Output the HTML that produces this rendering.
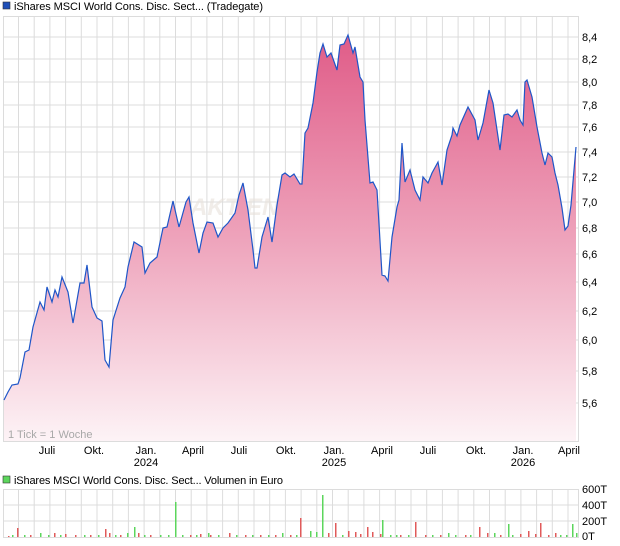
<!DOCTYPE html>
<html><head><meta charset="utf-8"><style>
html,body{margin:0;padding:0;background:#fff;width:620px;height:546px;overflow:hidden}
svg{display:block;font-family:"Liberation Sans",sans-serif}
</style></head><body>
<svg width="620" height="546" viewBox="0 0 620 546" xmlns="http://www.w3.org/2000/svg">
<defs>
<linearGradient id="g" gradientUnits="userSpaceOnUse" x1="0" y1="35" x2="0" y2="441">
<stop offset="0" stop-color="#e05c88"/><stop offset="0.5" stop-color="#eea3bb"/><stop offset="1" stop-color="#fdf3f6"/>
</linearGradient>
</defs>
<rect x="3" y="2" width="7" height="7" fill="#1f4fb8" stroke="#333" stroke-width="0.6"/>
<text x="14" y="10" font-size="11" fill="#000" textLength="249">iShares MSCI World Cons. Disc. Sect... (Tradegate)</text>
<g stroke="#dcdcdc" stroke-width="1" fill="none">
<path d="M3 37H578M3 59H578M3 82H578M3 105H578M3 127H578M3 152H578M3 177H578M3 202H578M3 228H578M3 254H578M3 282H578M3 311H578M3 340H578M3 371H578M3 403H578"/>
<path d="M18.5 16V441M34.2 16V441M49.9 16V441M65.6 16V441M81.3 16V441M97 16V441M112.7 16V441M128.4 16V441M144.1 16V441M159.8 16V441M175.5 16V441M191.2 16V441M206.9 16V441M222.6 16V441M238.3 16V441M254 16V441M269.7 16V441M285.4 16V441M301.1 16V441M316.8 16V441M332.5 16V441M348.2 16V441M363.9 16V441M379.6 16V441M395.3 16V441M411 16V441M426.7 16V441M442.4 16V441M458.1 16V441M473.8 16V441M489.5 16V441M505.2 16V441M520.9 16V441M536.6 16V441M552.3 16V441M568 16V441"/>
<rect x="3.5" y="16.5" width="575" height="425"/>
</g>
<text x="190" y="215" font-size="24" font-weight="bold" font-style="italic" fill="#e8e2dc" opacity="0.6">AKTIEN</text>
<path id="p" fill="url(#g)" stroke="none" d="M4 400L8 392L12 385L18 384L20 378L25 352L29 350L33 327L40 302L44 310L47 287L52 302L55 290L58 297L62 277L68 292L73 323L80 283L84 283L87 265L92 307L97 318L102 321L105 360L109 367L113 320L120 298L125 287L128 267L134 242L142 247L145 273L150 263L157 257L163 228L167 227L173 201L179 227L186 202L189 197L193 223L199 253L203 233L207 222L213 223L218 237L223 228L228 223L235 213L239 195L243 183L248 210L253 250L255 268L257 268L262 237L268 217L272 242L277 205L282 175L285 173L290 177L294 174L300 184L302 184L305 133L308 128L313 103L317 72L320 53L323 44L327 57L331 53L337 70L340 45L344 44L348 35L353 53L355 47L360 77L363 82L365 120L370 183L373 182L377 190L382 275L385 276L388 281L392 237L397 207L399 200L402 143L405 182L410 170L415 190L420 200L423 177L428 183L432 173L438 162L442 185L447 150L452 135L453 128L457 136L460 125L468 107L475 120L478 140L483 123L489 90L493 103L500 150L504 115L508 114L512 117L517 110L520 120L523 125L525 82L527 80L532 97L537 127L542 153L545 165L548 153L552 157L555 173L558 185L562 208L565 230L568 226L571 205L574 170L576 147L576 441L4 441Z"/>
<path fill="none" stroke="#1f56c8" stroke-width="1.2" d="M4 400L8 392L12 385L18 384L20 378L25 352L29 350L33 327L40 302L44 310L47 287L52 302L55 290L58 297L62 277L68 292L73 323L80 283L84 283L87 265L92 307L97 318L102 321L105 360L109 367L113 320L120 298L125 287L128 267L134 242L142 247L145 273L150 263L157 257L163 228L167 227L173 201L179 227L186 202L189 197L193 223L199 253L203 233L207 222L213 223L218 237L223 228L228 223L235 213L239 195L243 183L248 210L253 250L255 268L257 268L262 237L268 217L272 242L277 205L282 175L285 173L290 177L294 174L300 184L302 184L305 133L308 128L313 103L317 72L320 53L323 44L327 57L331 53L337 70L340 45L344 44L348 35L353 53L355 47L360 77L363 82L365 120L370 183L373 182L377 190L382 275L385 276L388 281L392 237L397 207L399 200L402 143L405 182L410 170L415 190L420 200L423 177L428 183L432 173L438 162L442 185L447 150L452 135L453 128L457 136L460 125L468 107L475 120L478 140L483 123L489 90L493 103L500 150L504 115L508 114L512 117L517 110L520 120L523 125L525 82L527 80L532 97L537 127L542 153L545 165L548 153L552 157L555 173L558 185L562 208L565 230L568 226L571 205L574 170L576 147"/>
<g font-size="11" fill="#000">
<text x="582" y="41">8,4</text><text x="582" y="63">8,2</text><text x="582" y="86">8,0</text><text x="582" y="109">7,8</text><text x="582" y="131">7,6</text><text x="582" y="156">7,4</text><text x="582" y="181">7,2</text><text x="582" y="206">7,0</text><text x="582" y="232">6,8</text><text x="582" y="258">6,6</text><text x="582" y="286">6,4</text><text x="582" y="315">6,2</text><text x="582" y="344">6,0</text><text x="582" y="375">5,8</text><text x="582" y="407">5,6</text>
</g>
<text x="8" y="438" font-size="11" fill="#a8a8a8">1 Tick = 1 Woche</text>
<g font-size="11" fill="#000" text-anchor="middle">
<text x="47" y="454">Juli</text><text x="94" y="454">Okt.</text><text x="146" y="454">Jan.</text><text x="146" y="466">2024</text><text x="193" y="454">April</text><text x="239" y="454">Juli</text><text x="286" y="454">Okt.</text><text x="334" y="454">Jan.</text><text x="334" y="466">2025</text><text x="382" y="454">April</text><text x="428" y="454">Juli</text><text x="476" y="454">Okt.</text><text x="523" y="454">Jan.</text><text x="523" y="466">2026</text><text x="569" y="454">April</text>
</g>
<rect x="3" y="476" width="7" height="7" fill="#5cd65c" stroke="#333" stroke-width="0.6"/>
<text x="14" y="484" font-size="11" fill="#000" textLength="269">iShares MSCI World Cons. Disc. Sect... Volumen in Euro</text>
<g stroke="#dcdcdc" stroke-width="1" fill="none">
<path d="M3 505H578M3 521H578"/>
<path d="M18.5 489V537M34.2 489V537M49.9 489V537M65.6 489V537M81.3 489V537M97 489V537M112.7 489V537M128.4 489V537M144.1 489V537M159.8 489V537M175.5 489V537M191.2 489V537M206.9 489V537M222.6 489V537M238.3 489V537M254 489V537M269.7 489V537M285.4 489V537M301.1 489V537M316.8 489V537M332.5 489V537M348.2 489V537M363.9 489V537M379.6 489V537M395.3 489V537M411 489V537M426.7 489V537M442.4 489V537M458.1 489V537M473.8 489V537M489.5 489V537M505.2 489V537M520.9 489V537M536.6 489V537M552.3 489V537M568 489V537"/>
<rect x="3.5" y="489.5" width="575" height="48"/>
</g>
<g font-size="11" fill="#000"><text x="582" y="493">600T</text><text x="582" y="509">400T</text><text x="582" y="525">200T</text><text x="582" y="540">0T</text></g>
<g fill="#e05a5a">
<rect x="17" y="528" width="1.5" height="9"/><rect x="54" y="533" width="1.5" height="4"/><rect x="65" y="534" width="1.5" height="3"/><rect x="105" y="529" width="1.5" height="8"/><rect x="109" y="533" width="1.5" height="4"/><rect x="138" y="533" width="1.5" height="4"/><rect x="200" y="534" width="1.5" height="3"/><rect x="229" y="533" width="1.5" height="4"/><rect x="300" y="518" width="1.5" height="19"/><rect x="328" y="533" width="1.5" height="4"/><rect x="335" y="523" width="1.5" height="14"/><rect x="348" y="531" width="1.5" height="6"/><rect x="355" y="532" width="1.5" height="5"/><rect x="367" y="527" width="1.5" height="10"/><rect x="372" y="532" width="1.5" height="5"/><rect x="415" y="522" width="1.5" height="15"/><rect x="479" y="527" width="1.5" height="10"/><rect x="487" y="533" width="1.5" height="4"/><rect x="528" y="531" width="1.5" height="6"/><rect x="540" y="523" width="1.5" height="14"/><rect x="555" y="533" width="1.5" height="4"/>
<path d="M8 536h1.5v1H8zM30 535h1.5v2H30zM75 535h1.5v2H75zM90 535h1.5v2H90zM120 535h1.5v2H120zM150 535h1.5v2H150zM190 535h1.5v2H190zM210 535h1.5v2H210zM245 535h1.5v2H245zM260 535h1.5v2H260zM275 535h1.5v2H275zM290 535h1.5v2H290zM310 535h1.5v2H310zM360 534h1.5v3H360zM380 534h1.5v3H380zM400 535h1.5v2H400zM425 535h1.5v2H425zM440 535h1.5v2H440zM465 535h1.5v2H465zM500 535h1.5v2H500zM520 534h1.5v3H520zM535 534h1.5v3H535zM548 535h1.5v2H548z"/>
</g>
<g fill="#5cd65c">
<rect x="175" y="502" width="1.5" height="35"/><rect x="322" y="495" width="1.5" height="42"/><rect x="382" y="520" width="1.5" height="17"/><rect x="134" y="527" width="1.5" height="10"/><rect x="310" y="531" width="1.5" height="6"/><rect x="508" y="524" width="1.5" height="13"/><rect x="572" y="524" width="1.5" height="13"/><rect x="576" y="533" width="1.5" height="4"/><rect x="40" y="533" width="1.5" height="4"/><rect x="127" y="533" width="1.5" height="4"/><rect x="208" y="533" width="1.5" height="4"/><rect x="282" y="533" width="1.5" height="4"/><rect x="316" y="532" width="1.5" height="5"/><rect x="448" y="533" width="1.5" height="4"/><rect x="494" y="533" width="1.5" height="4"/>
<path d="M12 535h1.5v2H12zM24 535h1.5v2H24zM48 535h1.5v2H48zM60 535h1.5v2H60zM84 535h1.5v2H84zM98 535h1.5v2H98zM115 535h1.5v2H115zM144 535h1.5v2H144zM160 535h1.5v2H160zM168 535h1.5v2H168zM182 535h1.5v2H182zM196 535h1.5v2H196zM218 535h1.5v2H218zM236 535h1.5v2H236zM252 535h1.5v2H252zM268 535h1.5v2H268zM296 535h1.5v2H296zM342 535h1.5v2H342zM390 535h1.5v2H390zM396 535h1.5v2H396zM408 535h1.5v2H408zM432 535h1.5v2H432zM455 535h1.5v2H455zM470 535h1.5v2H470zM512 535h1.5v2H512zM560 535h1.5v2H560zM566 535h1.5v2H566z"/>
</g>
</svg>
</body></html>
